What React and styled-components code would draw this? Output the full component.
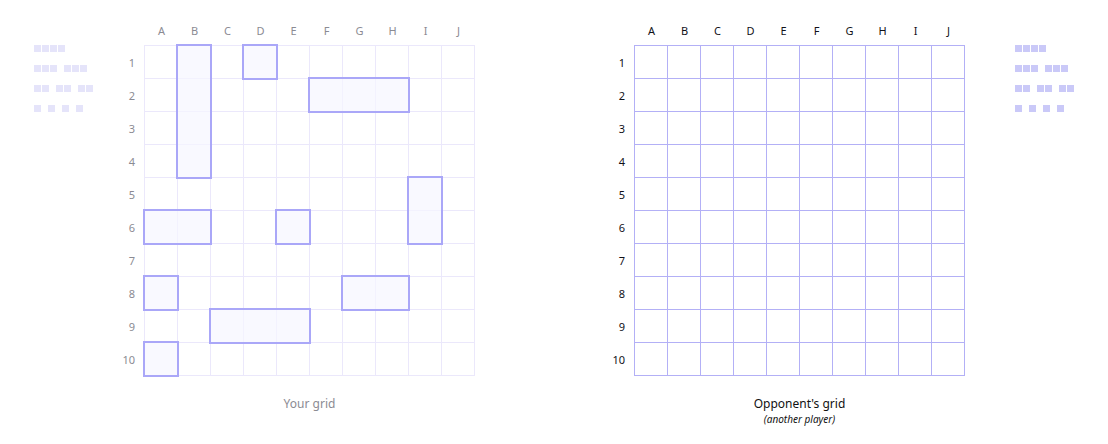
import React from 'react'
import styled, { createGlobalStyle } from 'styled-components'

const GlobalStyle = createGlobalStyle`
  html, body { margin: 0; padding: 0; background: #fff; }
  body { font-family: "Noto Sans", "Open Sans", sans-serif; }
`

const LETTERS = ['A', 'B', 'C', 'D', 'E', 'F', 'G', 'H', 'I', 'J']
const NUMBERS = [1, 2, 3, 4, 5, 6, 7, 8, 9, 10]

// fleet: [col, row, length, vertical]
const MY_SHIPS = [
  [2, 1, 4, true],
  [4, 1, 1, false],
  [6, 2, 3, false],
  [9, 5, 2, true],
  [1, 6, 2, false],
  [5, 6, 1, false],
  [1, 8, 1, false],
  [7, 8, 2, false],
  [3, 9, 3, false],
  [1, 10, 1, false],
]

const FLEET = [[4], [3, 3], [2, 2, 2], [1, 1, 1, 1]]

const Page = styled.div`
  display: flex;
  align-items: flex-start;
  width: 1108px;
  box-sizing: border-box;
  padding: 15px 34px 0;
`

const LegendBox = styled.div`
  display: flex;
  flex-direction: column;
  gap: 13px;
  width: ${p => p.$width}px;
  margin-top: 30px;
  margin-left: ${p => p.$offset || 0}px;
  flex-shrink: 0;
`

const LegendRow = styled.div`
  display: flex;
  gap: 7px;
`

const LegendShip = styled.div`
  display: flex;
  gap: 1px;
`

const Square = styled.span`
  display: block;
  width: 7px;
  height: 7px;
  background: ${p => (p.$strong ? '#cac9f8' : '#e5e4fa')};
`

const Board = styled.div`
  display: grid;
  grid-template-columns: 30px 331px;
  grid-template-rows: 30px 331px auto;
  margin-left: ${p => p.$offset || 0}px;
  flex-shrink: 0;
`

const Letters = styled.div`
  grid-column: 2;
  display: grid;
  grid-template-columns: repeat(10, 33px);
  padding-left: 1px;
  align-items: center;
`

const Letter = styled.span`
  text-align: center;
  font-size: 11px;
  line-height: 14px;
  color: ${p => (p.$dark ? '#111118' : '#8b8b93')};
  padding-top: 2px;
`

const Numbers = styled.div`
  grid-column: 1;
  grid-row: 2;
  display: grid;
  grid-template-rows: repeat(10, 33px);
  padding-top: 1px;
`

const Num = styled.span`
  display: flex;
  align-items: center;
  justify-content: flex-end;
  padding-right: 9px;
  font-size: 11px;
  color: ${p => (p.$dark ? '#111118' : '#8b8b93')};
`

const Field = styled.div`
  grid-column: 2;
  grid-row: 2;
  display: grid;
  grid-template-columns: repeat(10, 33px);
  grid-template-rows: repeat(10, 33px);
  border-left: 1px solid ${p => p.$line};
  border-top: 1px solid ${p => p.$line};
`

const Cell = styled.div`
  box-sizing: border-box;
  border-right: 1px solid ${p => p.$line};
  border-bottom: 1px solid ${p => p.$line};
`

const Ship = styled.div`
  z-index: 1;
  margin: -2px -1px -1px -2px;
  border: 2px solid #aaa7f8;
  background: rgba(247, 246, 255, 0.7);
`

const Caption = styled.div`
  grid-column: 2;
  grid-row: 3;
  text-align: center;
  padding-top: 19px;
`

const Title = styled.div`
  font-size: 12px;
  line-height: 17px;
  color: ${p => (p.$dark ? '#111' : '#8b8b93')};
`

const Subtitle = styled.div`
  font-size: 10px;
  line-height: 14px;
  font-style: italic;
  color: #111;
`

function Legend({ strong, width, offset }) {
  return (
    <LegendBox $width={width} $offset={offset}>
      {FLEET.map((row, i) => (
        <LegendRow key={i}>
          {row.map((len, j) => (
            <LegendShip key={j}>
              {Array.from({ length: len }).map((_, k) => <Square key={k} $strong={strong} />)}
            </LegendShip>
          ))}
        </LegendRow>
      ))}
    </LegendBox>
  )
}

function Grid({ ships, dark, line, title, subtitle, offset }) {
  return (
    <Board $offset={offset}>
      <Letters>
        {LETTERS.map(l => <Letter key={l} $dark={dark}>{l}</Letter>)}
      </Letters>
      <Numbers>
        {NUMBERS.map(n => <Num key={n} $dark={dark}>{n}</Num>)}
      </Numbers>
      <Field $line={line}>
        {NUMBERS.map(r => LETTERS.map((l, c) => (
          <Cell key={l + r} $line={line} style={{ gridColumn: c + 1, gridRow: r }} />
        )))}
        {ships.map(([c, r, len, vert], i) => (
          <Ship
            key={i}
            style={{
              gridColumn: vert ? `${c}` : `${c} / span ${len}`,
              gridRow: vert ? `${r} / span ${len}` : `${r}`,
            }}
          />
        ))}
      </Field>
      <Caption>
        <Title $dark={dark}>{title}</Title>
        {subtitle && <Subtitle>{subtitle}</Subtitle>}
      </Caption>
    </Board>
  )
}

export default function App() {
  return (
    <>
      <GlobalStyle />
      <Page>
        <Legend width={80} />
        <Grid ships={MY_SHIPS} line="#ebe8fb" title="Your grid" />
        <Grid ships={[]} dark line="#b3b0f6" title="Opponent's grid" subtitle="(another player)" offset={129} />
        <Legend strong width={60} offset={50} />
      </Page>
    </>
  )
}
